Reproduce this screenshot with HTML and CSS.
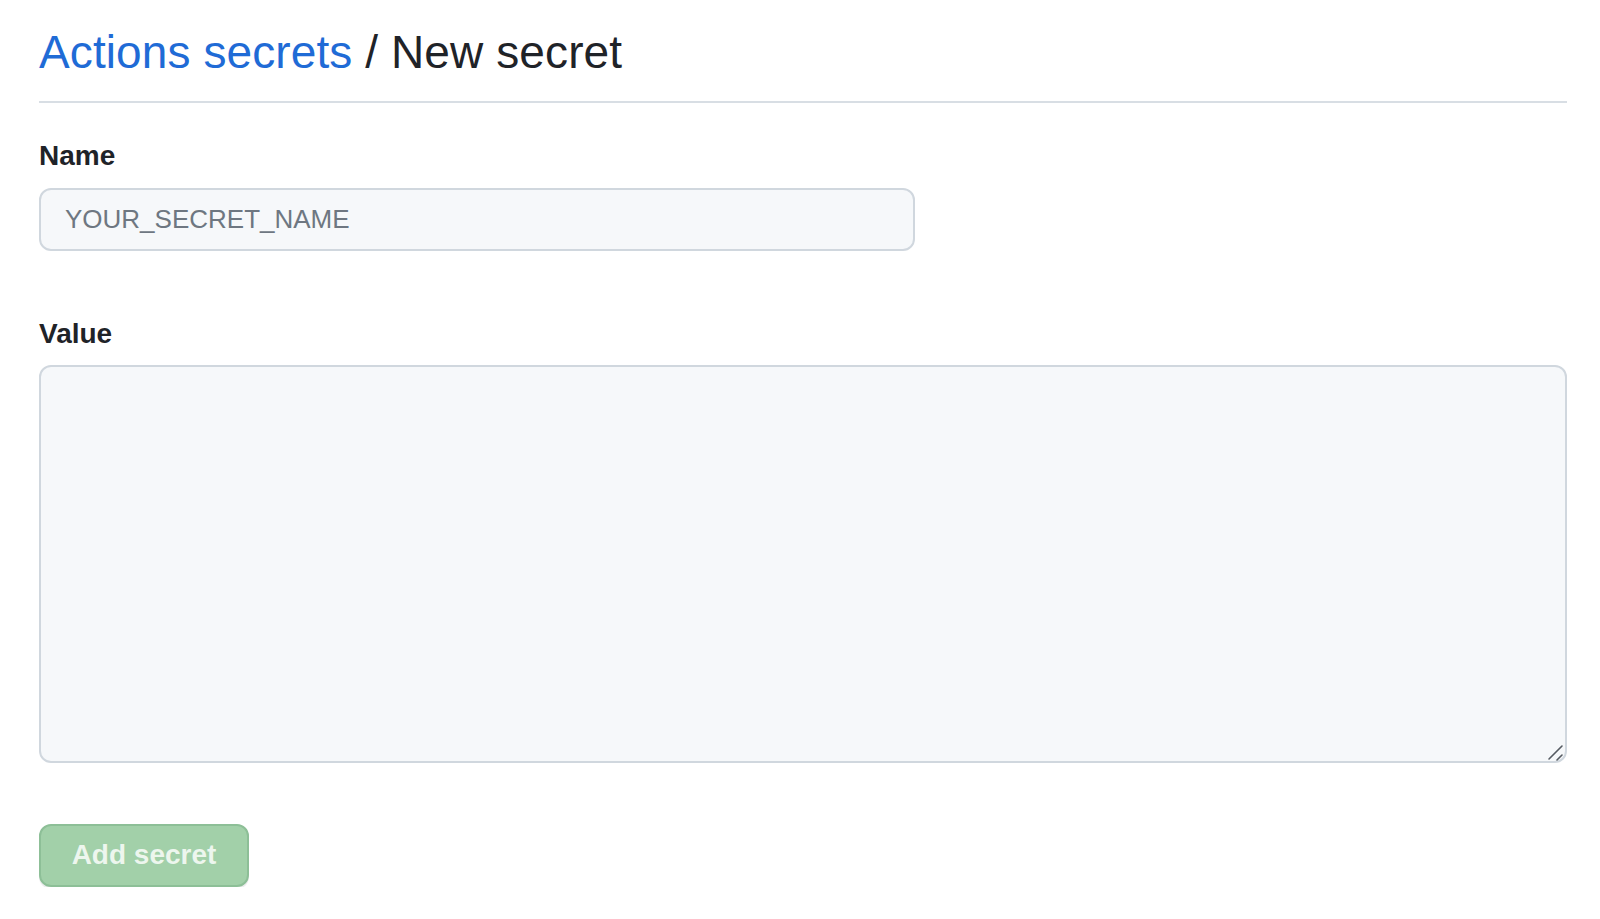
FILE: index.html
```html
<!DOCTYPE html>
<html lang="en">
<head>
<meta charset="utf-8">
<title>New secret</title>
<link rel="stylesheet" href="styles.css">
</head>
<body>
<main class="page">
  <h2 class="subhead"><a class="subhead-link" href="#">Actions secrets</a> / New secret</h2>
  <form class="form">
    <div class="form-group">
      <label class="form-label" for="secret-name">Name</label>
      <input class="form-input" id="secret-name" type="text" placeholder="YOUR_SECRET_NAME">
    </div>
    <div class="form-group form-group-value">
      <label class="form-label" for="secret-value">Value</label>
      <div class="textarea-wrap">
        <textarea class="form-textarea" id="secret-value"></textarea>
        <svg class="resize-grip" width="18" height="18" viewBox="0 0 18 18" aria-hidden="true">
          <line x1="3" y1="16" x2="16" y2="3" stroke="#555b62" stroke-width="1.6" stroke-linecap="round"/>
          <line x1="11" y1="17" x2="16" y2="12" stroke="#555b62" stroke-width="1.6" stroke-linecap="round"/>
        </svg>
      </div>
    </div>
    <button class="btn-primary" type="button" disabled>Add secret</button>
  </form>
</main>
</body>
</html>
```
FILE: styles.css
```css
* { box-sizing: border-box; }
html, body { margin: 0; padding: 0; background: #ffffff; }
body {
  font-family: "Liberation Sans", Arial, Helvetica, sans-serif;
  color: #1f2328;
}
.page {
  padding: 24px 33px 0 39px;
}
.subhead {
  margin: 0;
  font-size: 46px;
  font-weight: 400;
  line-height: 1.25;
  padding-bottom: 19px;
  border-bottom: 2px solid #d8dee4;
  color: #1f2328;
  letter-spacing: 0.1px;
}
.subhead-link {
  color: #1f6bd6;
  text-decoration: none;
}
.form {
  display: flex;
  flex-direction: column;
  align-items: flex-start;
  padding-top: 35px;
}
.form-group {
  display: flex;
  flex-direction: column;
  width: 100%;
}
.form-group-value {
  margin-top: 65px;
}
.form-label {
  font-size: 28px;
  font-weight: 700;
  line-height: 35px;
  color: #1f2328;
  margin-bottom: 14px;
}
.form-input {
  width: 876px;
  height: 63px;
  margin-top: 1px;
  padding: 0 24px;
  font-family: "Liberation Sans", Arial, Helvetica, sans-serif;
  font-size: 26px;
  color: #1f2328;
  background: #f6f8fa;
  border: 2px solid #d0d7de;
  border-radius: 12px;
  outline: none;
}
.form-input::placeholder {
  color: #6e7781;
}
.textarea-wrap {
  position: relative;
  width: 100%;
}
.form-textarea {
  display: block;
  width: 100%;
  height: 398px;
  padding: 16px 24px;
  font-family: "Liberation Sans", Arial, Helvetica, sans-serif;
  font-size: 26px;
  background: #f6f8fa;
  border: 2px solid #d0d7de;
  border-radius: 12px;
  outline: none;
  resize: none;
}
.resize-grip {
  position: absolute;
  right: 3px;
  bottom: 2px;
  pointer-events: none;
}
.btn-primary {
  margin-top: 61px;
  width: 210px;
  height: 63px;
  padding: 0;
  white-space: nowrap;
  text-align: center;
  font-family: "Liberation Sans", Arial, Helvetica, sans-serif;
  font-size: 28px;
  font-weight: 700;
  color: rgba(255, 255, 255, 0.82);
  background: #a2d0a9;
  border: 2px solid #8dbf97;
  border-radius: 12px;
  box-shadow: 0 2px 0 rgba(27, 31, 36, 0.08);
  cursor: default;
}
```
